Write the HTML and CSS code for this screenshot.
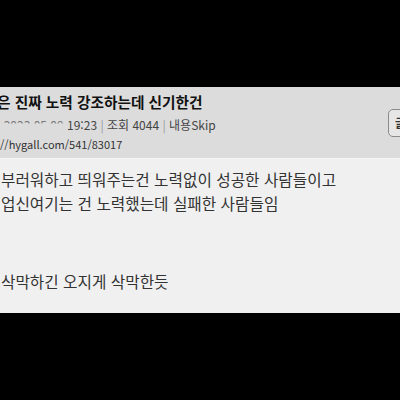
FILE: index.html
```html
<!DOCTYPE html>
<html lang="ko">
<head>
<meta charset="utf-8">
<link rel="stylesheet" href="styles.css">
</head>
<body>
<div class="page">
  <div class="card">
    <div class="header">
      <div class="info">
        <div class="title">은 진짜 노력 강조하는데 신기한건</div>
        <div class="meta"><span class="hidden">'&nbsp;2023.05.09</span> 19:23 <span class="sep">|</span> 조회 4044 <span class="sep">|</span> 내용Skip</div>
        <div class="url">//hygall.com/541/83017</div>
      </div>
      <div class="btn">글쓰기</div>
    </div>
    <div class="content">
      <p>부러워하고 띄워주는건 노력없이 성공한 사람들이고</p>
      <p>업신여기는 건 노력했는데 실패한 사람들임</p>
      <div class="blank"></div>
      <p>삭막하긴 오지게 삭막한듯</p>
    </div>
  </div>
</div>
</body>
</html>
```

FILE: styles.css
```css
html, body {
  margin: 0;
  padding: 0;
  background: #000;
}
.page {
  width: 400px;
  height: 400px;
  overflow: hidden;
  padding-top: 87px;
  box-sizing: border-box;
  font-family: "Noto Sans CJK KR", "Noto Sans", sans-serif;
}
.card {
  width: 400px;
  overflow: hidden;
}
.header {
  background: #dcdcdc;
  height: 71px;
  display: flex;
  align-items: center;
  justify-content: space-between;
  border-bottom: 1px solid #f6f6f6;
  box-sizing: content-box;
}
.info {
  margin-left: -3px;
  display: flex;
  flex-direction: column;
  padding-top: 0;
}
.title {
  font-size: 14.7px;
  font-weight: 700;
  line-height: 20px;
  color: #111;
  white-space: nowrap;
}
.meta {
  font-size: 12px;
  line-height: 18px;
  margin-top: 4px;
  color: #444;
  white-space: nowrap;
}
.hidden {
  display: inline-block;
  clip-path: inset(0 0 58% 0);
  color: #777;
}
.sep {
  color: #999;
}
.url {
  font-size: 11px;
  line-height: 18px;
  margin-top: 1px;
  color: #333;
  white-space: nowrap;
  margin-left: 3px;
}
.btn {
  flex: none;
  width: 40px;
  height: 26px;
  margin-right: -36px;
  margin-top: 1px;
  border: 1px solid #8a8a8a;
  border-radius: 5px;
  background: #e6e6e6;
  font-size: 12px;
  font-weight: 700;
  line-height: 26px;
  color: #333;
  padding-left: 6px;
  white-space: nowrap;
  overflow: hidden;
}
.content {
  background: #f0f0f0;
  height: 154px;
  padding-top: 9px;
  box-sizing: border-box;
  color: #333;
  font-size: 15.7px;
}
.content p {
  margin: 0 0 0 1px;
  line-height: 24px;
  white-space: nowrap;
}
.blank {
  height: 54px;
}
```
